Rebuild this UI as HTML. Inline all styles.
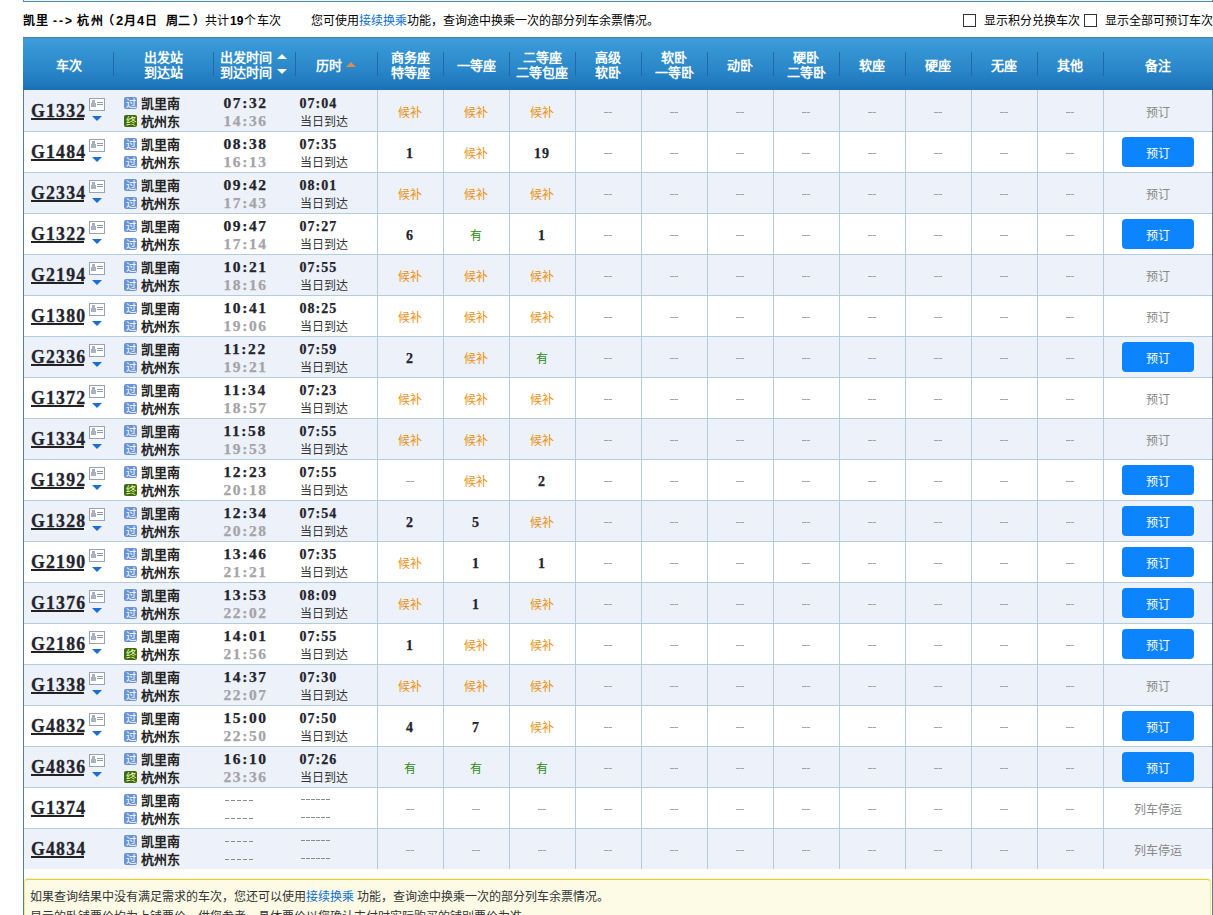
<!DOCTYPE html><html lang="zh-CN"><head><meta charset="utf-8"><style>
*{margin:0;padding:0;box-sizing:border-box}
html,body{width:1213px;height:915px;overflow:hidden;background:#fff}
body{position:relative;font-family:"Liberation Sans",sans-serif;font-size:12px;color:#333}
.a{position:absolute}
.topbox{left:23px;top:-10px;width:1190px;height:12px;border:1px solid #5a88a6;background:#dff9fd}
.title{left:23px;top:12px;height:18px;line-height:18px;white-space:nowrap;color:#000}
.title b{font-weight:bold}
.blue{color:#0b6fd0}
.cb{width:13px;height:13px;border:1px solid #333;background:#fff;top:14px}
.chk{top:12px;line-height:18px;color:#000;white-space:nowrap}
.tbl{left:23px;top:37px;width:1190px;height:900px;border-left:1px solid #527e98;border-right:1px solid #527e98}
.hd{left:23px;top:37px;width:1190px;height:53px;background:linear-gradient(#3e9dd9 0%,#3494d3 25%,#2a87c9 60%,#1f76bb 92%,#1b6db2 100%);border-top:1px solid #4d7f9e}
.hs{width:1px;top:52px;height:24px;background:#2667a8}
.ht{color:#fff;font-weight:bold;font-size:13px;text-align:center;line-height:15px;white-space:nowrap}
.row{left:24px;width:1188px;height:41px}
.odd{background:#edf1f9}
.even{background:#fff}
.hl{left:24px;width:1188px;height:1px;background:#b4cddd}
.vl{width:1px;background:#b4cddd;top:90px;height:779px}
.tn{font-family:"Liberation Serif",serif;font-weight:bold;font-size:17.8px;letter-spacing:1.2px;color:#23232d;line-height:20px;-webkit-text-stroke:0.3px #23232d}
.ul{left:31px;width:53px;height:2px;background:#222}
.card{width:16px;height:13px;border:1px solid #97a6bb;background:#fff}
.tri{width:0;height:0;border-left:5px solid transparent;border-right:5px solid transparent;border-top:5px solid #1a6fd6}
.bd{width:13px;height:12px;border-radius:2px;font-size:10.5px;line-height:12px;text-align:center;color:#fff;overflow:hidden}
.bg1{background:#6a94d6}
.bg2{background:#3f6a0e;color:#e8ffb0}
.st{font-weight:bold;font-size:13px;color:#222;line-height:18px;white-space:nowrap;letter-spacing:0px}
.t1{font-family:"Liberation Serif",serif;font-weight:bold;font-size:15.5px;letter-spacing:1.6px;color:#23232d;line-height:18px;-webkit-text-stroke:0.25px #23232d}
.t2{font-family:"Liberation Serif",serif;font-weight:bold;font-size:15.5px;letter-spacing:1.6px;color:#a4a4a8;line-height:18px;-webkit-text-stroke:0.25px #a4a4a8}
.d1{font-family:"Liberation Serif",serif;font-weight:bold;font-size:14px;letter-spacing:1px;color:#23232d;line-height:18px;-webkit-text-stroke:0.25px #23232d}
.d2{color:#333;line-height:18px;white-space:nowrap}
.sv{width:65px;text-align:center;line-height:18px}
.hb{color:#ec9212}
.num{font-family:"Liberation Serif",serif;font-weight:bold;font-size:14px;letter-spacing:1px;text-indent:1px;color:#23232d;margin-top:0px;-webkit-text-stroke:0.25px #23232d}
.you{color:#2a8a12}
.dsh{width:8px;height:1px;background:linear-gradient(90deg,#a4a4a4 0 4px,#c4c4c4 4px 5px,#a4a4a4 5px 8px)}
.btn{width:72px;height:30px;border-radius:4px;background:#0b84fe;color:#fff;text-align:center;line-height:34px}
.gy{width:108px;text-align:center;color:#888;line-height:18px}
.d5{width:28px;height:1px;background:repeating-linear-gradient(90deg,#8a8a8a 0 4px,transparent 4px 6px)}
.d6{width:29px;height:1px;background:repeating-linear-gradient(90deg,#8a8a8a 0 4px,transparent 4px 5px)}
.note{left:24px;top:879px;width:1187px;height:60px;border:1px solid #f3ec80;border-top-color:#dccb5e;border-radius:4px;background:#fdfbe6;box-shadow:0 -1px 0 #fbf7a8}
.nt{left:30px;line-height:18px;white-space:nowrap;color:#333}
</style></head><body>
<div class="a topbox"></div>
<div class="a title" style="left:23px;font-weight:bold;letter-spacing:1px;">凯里</div>
<div class="a title" style="left:53px;font-weight:bold;letter-spacing:2px;">--&gt;</div>
<div class="a title" style="left:77px;font-weight:bold;letter-spacing:1.5px;">杭州</div>
<div class="a title" style="left:102px;font-weight:bold;letter-spacing:0px;">（</div>
<div class="a title" style="left:116px;font-weight:bold;font-size:13px;letter-spacing:0px;">2</div>
<div class="a title" style="left:124px;font-weight:bold;letter-spacing:0px;">月</div>
<div class="a title" style="left:137px;font-weight:bold;font-size:13px;letter-spacing:0px;">4</div>
<div class="a title" style="left:145px;font-weight:bold;letter-spacing:0px;">日</div>
<div class="a title" style="left:166px;font-weight:bold;letter-spacing:0px;">周二</div>
<div class="a title" style="left:193px;font-weight:bold;letter-spacing:0px;">）</div>
<div class="a title" style="left:205px;letter-spacing:0px;">共计</div>
<div class="a title" style="left:230px;font-weight:bold;font-family:"Liberation Serif",serif;font-size:15px;letter-spacing:1px;">19</div>
<div class="a title" style="left:244px;letter-spacing:0.5px;">个车次</div>
<div class="a title" style="left:311px">您可使用<span class="blue">接续换乘</span>功能，查询途中换乘一次的部分列车余票情况。</div>
<div class="a cb" style="left:963px"></div><div class="a chk" style="left:984px">显示积分兑换车次</div>
<div class="a cb" style="left:1084px"></div><div class="a chk" style="left:1105px">显示全部可预订车次</div>
<div class="a tbl"></div>
<div class="a hd"></div>
<div class="a hs" style="left:113px"></div>
<div class="a hs" style="left:213px"></div>
<div class="a hs" style="left:295px"></div>
<div class="a hs" style="left:377px"></div>
<div class="a hs" style="left:443px"></div>
<div class="a hs" style="left:509px"></div>
<div class="a hs" style="left:575px"></div>
<div class="a hs" style="left:641px"></div>
<div class="a hs" style="left:707px"></div>
<div class="a hs" style="left:773px"></div>
<div class="a hs" style="left:839px"></div>
<div class="a hs" style="left:905px"></div>
<div class="a hs" style="left:971px"></div>
<div class="a hs" style="left:1037px"></div>
<div class="a hs" style="left:1103px"></div>
<div class="a ht" style="left:8.5px;width:120px;top:58px">车次</div>
<div class="a ht" style="left:103.5px;width:120px;top:50px">出发站<br>到达站</div>
<div class="a ht" style="left:220px;top:50px;text-align:left">出发时间<br>到达时间</div>
<svg class="a" style="left:277px;top:54px" width="10" height="5"><polygon points="0,5 5,0 10,5" fill="#fff"/></svg>
<svg class="a" style="left:277px;top:69px" width="10" height="5"><polygon points="0,0 5,5 10,0" fill="#fff"/></svg>
<div class="a ht" style="left:316px;top:58px;text-align:left">历时</div>
<svg class="a" style="left:346px;top:62px" width="10" height="5"><polygon points="0,5 5,0 10,5" fill="#e38a4a"/></svg>
<div class="a ht" style="left:350.0px;width:120px;top:50px">商务座<br>特等座</div>
<div class="a ht" style="left:416.0px;width:120px;top:58px">一等座</div>
<div class="a ht" style="left:482.0px;width:120px;top:50px">二等座<br>二等包座</div>
<div class="a ht" style="left:548.0px;width:120px;top:50px">高级<br>软卧</div>
<div class="a ht" style="left:614.0px;width:120px;top:50px">软卧<br>一等卧</div>
<div class="a ht" style="left:680.0px;width:120px;top:58px">动卧</div>
<div class="a ht" style="left:746.0px;width:120px;top:50px">硬卧<br>二等卧</div>
<div class="a ht" style="left:812.0px;width:120px;top:58px">软座</div>
<div class="a ht" style="left:878.0px;width:120px;top:58px">硬座</div>
<div class="a ht" style="left:944.0px;width:120px;top:58px">无座</div>
<div class="a ht" style="left:1010.0px;width:120px;top:58px">其他</div>
<div class="a ht" style="left:1097.5px;width:120px;top:58px">备注</div>
<div class="a row odd" style="top:90px"></div>
<div class="a tn" style="left:31px;top:101px">G1332</div>
<div class="a ul" style="top:118px"></div>
<svg class="a" style="left:89px;top:98px" width="16" height="13"><rect x="0.5" y="0.5" width="15" height="12" fill="#fff" stroke="#97a3b5"/><rect x="3" y="2" width="3" height="4" fill="#a8b1bd"/><rect x="2" y="5" width="5" height="4" fill="#a8b1bd"/><rect x="8" y="4" width="6" height="1" fill="#8e99aa"/><rect x="8" y="6" width="6" height="1" fill="#8e99aa"/></svg>
<div class="a tri" style="left:92px;top:116px"></div>
<div class="a bd bg1" style="left:124px;top:97px">过</div>
<div class="a bd bg2" style="left:124px;top:115px">终</div>
<div class="a st" style="left:141px;top:95px">凯里南</div>
<div class="a st" style="left:141px;top:113px">杭州东</div>
<div class="a t1" style="left:223.5px;top:94px">07:32</div>
<div class="a t2" style="left:223.5px;top:112px">14:36</div>
<div class="a d1" style="left:299.5px;top:95px">07:04</div>
<div class="a d2" style="left:300px;top:113px">当日到达</div>
<div class="a sv hb" style="left:377px;top:104px">候补</div>
<div class="a sv hb" style="left:443px;top:104px">候补</div>
<div class="a sv hb" style="left:509px;top:104px">候补</div>
<div class="a dsh" style="left:604px;top:112px"></div>
<div class="a dsh" style="left:670px;top:112px"></div>
<div class="a dsh" style="left:736px;top:112px"></div>
<div class="a dsh" style="left:802px;top:112px"></div>
<div class="a dsh" style="left:868px;top:112px"></div>
<div class="a dsh" style="left:934px;top:112px"></div>
<div class="a dsh" style="left:1000px;top:112px"></div>
<div class="a dsh" style="left:1066px;top:112px"></div>
<div class="a gy" style="left:1104px;top:104px">预订</div>
<div class="a row even" style="top:132px;height:40px"></div>
<div class="a hl" style="top:131px"></div>
<div class="a tn" style="left:31px;top:142px">G1484</div>
<div class="a ul" style="top:159px"></div>
<svg class="a" style="left:89px;top:139px" width="16" height="13"><rect x="0.5" y="0.5" width="15" height="12" fill="#fff" stroke="#97a3b5"/><rect x="3" y="2" width="3" height="4" fill="#a8b1bd"/><rect x="2" y="5" width="5" height="4" fill="#a8b1bd"/><rect x="8" y="4" width="6" height="1" fill="#8e99aa"/><rect x="8" y="6" width="6" height="1" fill="#8e99aa"/></svg>
<div class="a tri" style="left:92px;top:157px"></div>
<div class="a bd bg1" style="left:124px;top:138px">过</div>
<div class="a bd bg1" style="left:124px;top:156px">过</div>
<div class="a st" style="left:141px;top:136px">凯里南</div>
<div class="a st" style="left:141px;top:154px">杭州东</div>
<div class="a t1" style="left:223.5px;top:135px">08:38</div>
<div class="a t2" style="left:223.5px;top:153px">16:13</div>
<div class="a d1" style="left:299.5px;top:136px">07:35</div>
<div class="a d2" style="left:300px;top:154px">当日到达</div>
<div class="a sv num" style="left:377px;top:145px">1</div>
<div class="a sv hb" style="left:443px;top:145px">候补</div>
<div class="a sv num" style="left:509px;top:145px">19</div>
<div class="a dsh" style="left:604px;top:153px"></div>
<div class="a dsh" style="left:670px;top:153px"></div>
<div class="a dsh" style="left:736px;top:153px"></div>
<div class="a dsh" style="left:802px;top:153px"></div>
<div class="a dsh" style="left:868px;top:153px"></div>
<div class="a dsh" style="left:934px;top:153px"></div>
<div class="a dsh" style="left:1000px;top:153px"></div>
<div class="a dsh" style="left:1066px;top:153px"></div>
<div class="a btn" style="left:1122px;top:137px">预订</div>
<div class="a row odd" style="top:173px;height:40px"></div>
<div class="a hl" style="top:172px"></div>
<div class="a tn" style="left:31px;top:183px">G2334</div>
<div class="a ul" style="top:200px"></div>
<svg class="a" style="left:89px;top:180px" width="16" height="13"><rect x="0.5" y="0.5" width="15" height="12" fill="#fff" stroke="#97a3b5"/><rect x="3" y="2" width="3" height="4" fill="#a8b1bd"/><rect x="2" y="5" width="5" height="4" fill="#a8b1bd"/><rect x="8" y="4" width="6" height="1" fill="#8e99aa"/><rect x="8" y="6" width="6" height="1" fill="#8e99aa"/></svg>
<div class="a tri" style="left:92px;top:198px"></div>
<div class="a bd bg1" style="left:124px;top:179px">过</div>
<div class="a bd bg1" style="left:124px;top:197px">过</div>
<div class="a st" style="left:141px;top:177px">凯里南</div>
<div class="a st" style="left:141px;top:195px">杭州东</div>
<div class="a t1" style="left:223.5px;top:176px">09:42</div>
<div class="a t2" style="left:223.5px;top:194px">17:43</div>
<div class="a d1" style="left:299.5px;top:177px">08:01</div>
<div class="a d2" style="left:300px;top:195px">当日到达</div>
<div class="a sv hb" style="left:377px;top:186px">候补</div>
<div class="a sv hb" style="left:443px;top:186px">候补</div>
<div class="a sv hb" style="left:509px;top:186px">候补</div>
<div class="a dsh" style="left:604px;top:194px"></div>
<div class="a dsh" style="left:670px;top:194px"></div>
<div class="a dsh" style="left:736px;top:194px"></div>
<div class="a dsh" style="left:802px;top:194px"></div>
<div class="a dsh" style="left:868px;top:194px"></div>
<div class="a dsh" style="left:934px;top:194px"></div>
<div class="a dsh" style="left:1000px;top:194px"></div>
<div class="a dsh" style="left:1066px;top:194px"></div>
<div class="a gy" style="left:1104px;top:186px">预订</div>
<div class="a row even" style="top:214px;height:40px"></div>
<div class="a hl" style="top:213px"></div>
<div class="a tn" style="left:31px;top:224px">G1322</div>
<div class="a ul" style="top:241px"></div>
<svg class="a" style="left:89px;top:221px" width="16" height="13"><rect x="0.5" y="0.5" width="15" height="12" fill="#fff" stroke="#97a3b5"/><rect x="3" y="2" width="3" height="4" fill="#a8b1bd"/><rect x="2" y="5" width="5" height="4" fill="#a8b1bd"/><rect x="8" y="4" width="6" height="1" fill="#8e99aa"/><rect x="8" y="6" width="6" height="1" fill="#8e99aa"/></svg>
<div class="a tri" style="left:92px;top:239px"></div>
<div class="a bd bg1" style="left:124px;top:220px">过</div>
<div class="a bd bg1" style="left:124px;top:238px">过</div>
<div class="a st" style="left:141px;top:218px">凯里南</div>
<div class="a st" style="left:141px;top:236px">杭州东</div>
<div class="a t1" style="left:223.5px;top:217px">09:47</div>
<div class="a t2" style="left:223.5px;top:235px">17:14</div>
<div class="a d1" style="left:299.5px;top:218px">07:27</div>
<div class="a d2" style="left:300px;top:236px">当日到达</div>
<div class="a sv num" style="left:377px;top:227px">6</div>
<div class="a sv you" style="left:443px;top:227px">有</div>
<div class="a sv num" style="left:509px;top:227px">1</div>
<div class="a dsh" style="left:604px;top:235px"></div>
<div class="a dsh" style="left:670px;top:235px"></div>
<div class="a dsh" style="left:736px;top:235px"></div>
<div class="a dsh" style="left:802px;top:235px"></div>
<div class="a dsh" style="left:868px;top:235px"></div>
<div class="a dsh" style="left:934px;top:235px"></div>
<div class="a dsh" style="left:1000px;top:235px"></div>
<div class="a dsh" style="left:1066px;top:235px"></div>
<div class="a btn" style="left:1122px;top:219px">预订</div>
<div class="a row odd" style="top:255px;height:40px"></div>
<div class="a hl" style="top:254px"></div>
<div class="a tn" style="left:31px;top:265px">G2194</div>
<div class="a ul" style="top:282px"></div>
<svg class="a" style="left:89px;top:262px" width="16" height="13"><rect x="0.5" y="0.5" width="15" height="12" fill="#fff" stroke="#97a3b5"/><rect x="3" y="2" width="3" height="4" fill="#a8b1bd"/><rect x="2" y="5" width="5" height="4" fill="#a8b1bd"/><rect x="8" y="4" width="6" height="1" fill="#8e99aa"/><rect x="8" y="6" width="6" height="1" fill="#8e99aa"/></svg>
<div class="a tri" style="left:92px;top:280px"></div>
<div class="a bd bg1" style="left:124px;top:261px">过</div>
<div class="a bd bg1" style="left:124px;top:279px">过</div>
<div class="a st" style="left:141px;top:259px">凯里南</div>
<div class="a st" style="left:141px;top:277px">杭州东</div>
<div class="a t1" style="left:223.5px;top:258px">10:21</div>
<div class="a t2" style="left:223.5px;top:276px">18:16</div>
<div class="a d1" style="left:299.5px;top:259px">07:55</div>
<div class="a d2" style="left:300px;top:277px">当日到达</div>
<div class="a sv hb" style="left:377px;top:268px">候补</div>
<div class="a sv hb" style="left:443px;top:268px">候补</div>
<div class="a sv hb" style="left:509px;top:268px">候补</div>
<div class="a dsh" style="left:604px;top:276px"></div>
<div class="a dsh" style="left:670px;top:276px"></div>
<div class="a dsh" style="left:736px;top:276px"></div>
<div class="a dsh" style="left:802px;top:276px"></div>
<div class="a dsh" style="left:868px;top:276px"></div>
<div class="a dsh" style="left:934px;top:276px"></div>
<div class="a dsh" style="left:1000px;top:276px"></div>
<div class="a dsh" style="left:1066px;top:276px"></div>
<div class="a gy" style="left:1104px;top:268px">预订</div>
<div class="a row even" style="top:296px;height:40px"></div>
<div class="a hl" style="top:295px"></div>
<div class="a tn" style="left:31px;top:306px">G1380</div>
<div class="a ul" style="top:323px"></div>
<svg class="a" style="left:89px;top:303px" width="16" height="13"><rect x="0.5" y="0.5" width="15" height="12" fill="#fff" stroke="#97a3b5"/><rect x="3" y="2" width="3" height="4" fill="#a8b1bd"/><rect x="2" y="5" width="5" height="4" fill="#a8b1bd"/><rect x="8" y="4" width="6" height="1" fill="#8e99aa"/><rect x="8" y="6" width="6" height="1" fill="#8e99aa"/></svg>
<div class="a tri" style="left:92px;top:321px"></div>
<div class="a bd bg1" style="left:124px;top:302px">过</div>
<div class="a bd bg1" style="left:124px;top:320px">过</div>
<div class="a st" style="left:141px;top:300px">凯里南</div>
<div class="a st" style="left:141px;top:318px">杭州东</div>
<div class="a t1" style="left:223.5px;top:299px">10:41</div>
<div class="a t2" style="left:223.5px;top:317px">19:06</div>
<div class="a d1" style="left:299.5px;top:300px">08:25</div>
<div class="a d2" style="left:300px;top:318px">当日到达</div>
<div class="a sv hb" style="left:377px;top:309px">候补</div>
<div class="a sv hb" style="left:443px;top:309px">候补</div>
<div class="a sv hb" style="left:509px;top:309px">候补</div>
<div class="a dsh" style="left:604px;top:317px"></div>
<div class="a dsh" style="left:670px;top:317px"></div>
<div class="a dsh" style="left:736px;top:317px"></div>
<div class="a dsh" style="left:802px;top:317px"></div>
<div class="a dsh" style="left:868px;top:317px"></div>
<div class="a dsh" style="left:934px;top:317px"></div>
<div class="a dsh" style="left:1000px;top:317px"></div>
<div class="a dsh" style="left:1066px;top:317px"></div>
<div class="a gy" style="left:1104px;top:309px">预订</div>
<div class="a row odd" style="top:337px;height:40px"></div>
<div class="a hl" style="top:336px"></div>
<div class="a tn" style="left:31px;top:347px">G2336</div>
<div class="a ul" style="top:364px"></div>
<svg class="a" style="left:89px;top:344px" width="16" height="13"><rect x="0.5" y="0.5" width="15" height="12" fill="#fff" stroke="#97a3b5"/><rect x="3" y="2" width="3" height="4" fill="#a8b1bd"/><rect x="2" y="5" width="5" height="4" fill="#a8b1bd"/><rect x="8" y="4" width="6" height="1" fill="#8e99aa"/><rect x="8" y="6" width="6" height="1" fill="#8e99aa"/></svg>
<div class="a tri" style="left:92px;top:362px"></div>
<div class="a bd bg1" style="left:124px;top:343px">过</div>
<div class="a bd bg1" style="left:124px;top:361px">过</div>
<div class="a st" style="left:141px;top:341px">凯里南</div>
<div class="a st" style="left:141px;top:359px">杭州东</div>
<div class="a t1" style="left:223.5px;top:340px">11:22</div>
<div class="a t2" style="left:223.5px;top:358px">19:21</div>
<div class="a d1" style="left:299.5px;top:341px">07:59</div>
<div class="a d2" style="left:300px;top:359px">当日到达</div>
<div class="a sv num" style="left:377px;top:350px">2</div>
<div class="a sv hb" style="left:443px;top:350px">候补</div>
<div class="a sv you" style="left:509px;top:350px">有</div>
<div class="a dsh" style="left:604px;top:358px"></div>
<div class="a dsh" style="left:670px;top:358px"></div>
<div class="a dsh" style="left:736px;top:358px"></div>
<div class="a dsh" style="left:802px;top:358px"></div>
<div class="a dsh" style="left:868px;top:358px"></div>
<div class="a dsh" style="left:934px;top:358px"></div>
<div class="a dsh" style="left:1000px;top:358px"></div>
<div class="a dsh" style="left:1066px;top:358px"></div>
<div class="a btn" style="left:1122px;top:342px">预订</div>
<div class="a row even" style="top:378px;height:40px"></div>
<div class="a hl" style="top:377px"></div>
<div class="a tn" style="left:31px;top:388px">G1372</div>
<div class="a ul" style="top:405px"></div>
<svg class="a" style="left:89px;top:385px" width="16" height="13"><rect x="0.5" y="0.5" width="15" height="12" fill="#fff" stroke="#97a3b5"/><rect x="3" y="2" width="3" height="4" fill="#a8b1bd"/><rect x="2" y="5" width="5" height="4" fill="#a8b1bd"/><rect x="8" y="4" width="6" height="1" fill="#8e99aa"/><rect x="8" y="6" width="6" height="1" fill="#8e99aa"/></svg>
<div class="a tri" style="left:92px;top:403px"></div>
<div class="a bd bg1" style="left:124px;top:384px">过</div>
<div class="a bd bg1" style="left:124px;top:402px">过</div>
<div class="a st" style="left:141px;top:382px">凯里南</div>
<div class="a st" style="left:141px;top:400px">杭州东</div>
<div class="a t1" style="left:223.5px;top:381px">11:34</div>
<div class="a t2" style="left:223.5px;top:399px">18:57</div>
<div class="a d1" style="left:299.5px;top:382px">07:23</div>
<div class="a d2" style="left:300px;top:400px">当日到达</div>
<div class="a sv hb" style="left:377px;top:391px">候补</div>
<div class="a sv hb" style="left:443px;top:391px">候补</div>
<div class="a sv hb" style="left:509px;top:391px">候补</div>
<div class="a dsh" style="left:604px;top:399px"></div>
<div class="a dsh" style="left:670px;top:399px"></div>
<div class="a dsh" style="left:736px;top:399px"></div>
<div class="a dsh" style="left:802px;top:399px"></div>
<div class="a dsh" style="left:868px;top:399px"></div>
<div class="a dsh" style="left:934px;top:399px"></div>
<div class="a dsh" style="left:1000px;top:399px"></div>
<div class="a dsh" style="left:1066px;top:399px"></div>
<div class="a gy" style="left:1104px;top:391px">预订</div>
<div class="a row odd" style="top:419px;height:40px"></div>
<div class="a hl" style="top:418px"></div>
<div class="a tn" style="left:31px;top:429px">G1334</div>
<div class="a ul" style="top:446px"></div>
<svg class="a" style="left:89px;top:426px" width="16" height="13"><rect x="0.5" y="0.5" width="15" height="12" fill="#fff" stroke="#97a3b5"/><rect x="3" y="2" width="3" height="4" fill="#a8b1bd"/><rect x="2" y="5" width="5" height="4" fill="#a8b1bd"/><rect x="8" y="4" width="6" height="1" fill="#8e99aa"/><rect x="8" y="6" width="6" height="1" fill="#8e99aa"/></svg>
<div class="a tri" style="left:92px;top:444px"></div>
<div class="a bd bg1" style="left:124px;top:425px">过</div>
<div class="a bd bg1" style="left:124px;top:443px">过</div>
<div class="a st" style="left:141px;top:423px">凯里南</div>
<div class="a st" style="left:141px;top:441px">杭州东</div>
<div class="a t1" style="left:223.5px;top:422px">11:58</div>
<div class="a t2" style="left:223.5px;top:440px">19:53</div>
<div class="a d1" style="left:299.5px;top:423px">07:55</div>
<div class="a d2" style="left:300px;top:441px">当日到达</div>
<div class="a sv hb" style="left:377px;top:432px">候补</div>
<div class="a sv hb" style="left:443px;top:432px">候补</div>
<div class="a sv hb" style="left:509px;top:432px">候补</div>
<div class="a dsh" style="left:604px;top:440px"></div>
<div class="a dsh" style="left:670px;top:440px"></div>
<div class="a dsh" style="left:736px;top:440px"></div>
<div class="a dsh" style="left:802px;top:440px"></div>
<div class="a dsh" style="left:868px;top:440px"></div>
<div class="a dsh" style="left:934px;top:440px"></div>
<div class="a dsh" style="left:1000px;top:440px"></div>
<div class="a dsh" style="left:1066px;top:440px"></div>
<div class="a gy" style="left:1104px;top:432px">预订</div>
<div class="a row even" style="top:460px;height:40px"></div>
<div class="a hl" style="top:459px"></div>
<div class="a tn" style="left:31px;top:470px">G1392</div>
<div class="a ul" style="top:487px"></div>
<svg class="a" style="left:89px;top:467px" width="16" height="13"><rect x="0.5" y="0.5" width="15" height="12" fill="#fff" stroke="#97a3b5"/><rect x="3" y="2" width="3" height="4" fill="#a8b1bd"/><rect x="2" y="5" width="5" height="4" fill="#a8b1bd"/><rect x="8" y="4" width="6" height="1" fill="#8e99aa"/><rect x="8" y="6" width="6" height="1" fill="#8e99aa"/></svg>
<div class="a tri" style="left:92px;top:485px"></div>
<div class="a bd bg1" style="left:124px;top:466px">过</div>
<div class="a bd bg2" style="left:124px;top:484px">终</div>
<div class="a st" style="left:141px;top:464px">凯里南</div>
<div class="a st" style="left:141px;top:482px">杭州东</div>
<div class="a t1" style="left:223.5px;top:463px">12:23</div>
<div class="a t2" style="left:223.5px;top:481px">20:18</div>
<div class="a d1" style="left:299.5px;top:464px">07:55</div>
<div class="a d2" style="left:300px;top:482px">当日到达</div>
<div class="a dsh" style="left:406px;top:481px"></div>
<div class="a sv hb" style="left:443px;top:473px">候补</div>
<div class="a sv num" style="left:509px;top:473px">2</div>
<div class="a dsh" style="left:604px;top:481px"></div>
<div class="a dsh" style="left:670px;top:481px"></div>
<div class="a dsh" style="left:736px;top:481px"></div>
<div class="a dsh" style="left:802px;top:481px"></div>
<div class="a dsh" style="left:868px;top:481px"></div>
<div class="a dsh" style="left:934px;top:481px"></div>
<div class="a dsh" style="left:1000px;top:481px"></div>
<div class="a dsh" style="left:1066px;top:481px"></div>
<div class="a btn" style="left:1122px;top:465px">预订</div>
<div class="a row odd" style="top:501px;height:40px"></div>
<div class="a hl" style="top:500px"></div>
<div class="a tn" style="left:31px;top:511px">G1328</div>
<div class="a ul" style="top:528px"></div>
<svg class="a" style="left:89px;top:508px" width="16" height="13"><rect x="0.5" y="0.5" width="15" height="12" fill="#fff" stroke="#97a3b5"/><rect x="3" y="2" width="3" height="4" fill="#a8b1bd"/><rect x="2" y="5" width="5" height="4" fill="#a8b1bd"/><rect x="8" y="4" width="6" height="1" fill="#8e99aa"/><rect x="8" y="6" width="6" height="1" fill="#8e99aa"/></svg>
<div class="a tri" style="left:92px;top:526px"></div>
<div class="a bd bg1" style="left:124px;top:507px">过</div>
<div class="a bd bg1" style="left:124px;top:525px">过</div>
<div class="a st" style="left:141px;top:505px">凯里南</div>
<div class="a st" style="left:141px;top:523px">杭州东</div>
<div class="a t1" style="left:223.5px;top:504px">12:34</div>
<div class="a t2" style="left:223.5px;top:522px">20:28</div>
<div class="a d1" style="left:299.5px;top:505px">07:54</div>
<div class="a d2" style="left:300px;top:523px">当日到达</div>
<div class="a sv num" style="left:377px;top:514px">2</div>
<div class="a sv num" style="left:443px;top:514px">5</div>
<div class="a sv hb" style="left:509px;top:514px">候补</div>
<div class="a dsh" style="left:604px;top:522px"></div>
<div class="a dsh" style="left:670px;top:522px"></div>
<div class="a dsh" style="left:736px;top:522px"></div>
<div class="a dsh" style="left:802px;top:522px"></div>
<div class="a dsh" style="left:868px;top:522px"></div>
<div class="a dsh" style="left:934px;top:522px"></div>
<div class="a dsh" style="left:1000px;top:522px"></div>
<div class="a dsh" style="left:1066px;top:522px"></div>
<div class="a btn" style="left:1122px;top:506px">预订</div>
<div class="a row even" style="top:542px;height:40px"></div>
<div class="a hl" style="top:541px"></div>
<div class="a tn" style="left:31px;top:552px">G2190</div>
<div class="a ul" style="top:569px"></div>
<svg class="a" style="left:89px;top:549px" width="16" height="13"><rect x="0.5" y="0.5" width="15" height="12" fill="#fff" stroke="#97a3b5"/><rect x="3" y="2" width="3" height="4" fill="#a8b1bd"/><rect x="2" y="5" width="5" height="4" fill="#a8b1bd"/><rect x="8" y="4" width="6" height="1" fill="#8e99aa"/><rect x="8" y="6" width="6" height="1" fill="#8e99aa"/></svg>
<div class="a tri" style="left:92px;top:567px"></div>
<div class="a bd bg1" style="left:124px;top:548px">过</div>
<div class="a bd bg1" style="left:124px;top:566px">过</div>
<div class="a st" style="left:141px;top:546px">凯里南</div>
<div class="a st" style="left:141px;top:564px">杭州东</div>
<div class="a t1" style="left:223.5px;top:545px">13:46</div>
<div class="a t2" style="left:223.5px;top:563px">21:21</div>
<div class="a d1" style="left:299.5px;top:546px">07:35</div>
<div class="a d2" style="left:300px;top:564px">当日到达</div>
<div class="a sv hb" style="left:377px;top:555px">候补</div>
<div class="a sv num" style="left:443px;top:555px">1</div>
<div class="a sv num" style="left:509px;top:555px">1</div>
<div class="a dsh" style="left:604px;top:563px"></div>
<div class="a dsh" style="left:670px;top:563px"></div>
<div class="a dsh" style="left:736px;top:563px"></div>
<div class="a dsh" style="left:802px;top:563px"></div>
<div class="a dsh" style="left:868px;top:563px"></div>
<div class="a dsh" style="left:934px;top:563px"></div>
<div class="a dsh" style="left:1000px;top:563px"></div>
<div class="a dsh" style="left:1066px;top:563px"></div>
<div class="a btn" style="left:1122px;top:547px">预订</div>
<div class="a row odd" style="top:583px;height:40px"></div>
<div class="a hl" style="top:582px"></div>
<div class="a tn" style="left:31px;top:593px">G1376</div>
<div class="a ul" style="top:610px"></div>
<svg class="a" style="left:89px;top:590px" width="16" height="13"><rect x="0.5" y="0.5" width="15" height="12" fill="#fff" stroke="#97a3b5"/><rect x="3" y="2" width="3" height="4" fill="#a8b1bd"/><rect x="2" y="5" width="5" height="4" fill="#a8b1bd"/><rect x="8" y="4" width="6" height="1" fill="#8e99aa"/><rect x="8" y="6" width="6" height="1" fill="#8e99aa"/></svg>
<div class="a tri" style="left:92px;top:608px"></div>
<div class="a bd bg1" style="left:124px;top:589px">过</div>
<div class="a bd bg1" style="left:124px;top:607px">过</div>
<div class="a st" style="left:141px;top:587px">凯里南</div>
<div class="a st" style="left:141px;top:605px">杭州东</div>
<div class="a t1" style="left:223.5px;top:586px">13:53</div>
<div class="a t2" style="left:223.5px;top:604px">22:02</div>
<div class="a d1" style="left:299.5px;top:587px">08:09</div>
<div class="a d2" style="left:300px;top:605px">当日到达</div>
<div class="a sv hb" style="left:377px;top:596px">候补</div>
<div class="a sv num" style="left:443px;top:596px">1</div>
<div class="a sv hb" style="left:509px;top:596px">候补</div>
<div class="a dsh" style="left:604px;top:604px"></div>
<div class="a dsh" style="left:670px;top:604px"></div>
<div class="a dsh" style="left:736px;top:604px"></div>
<div class="a dsh" style="left:802px;top:604px"></div>
<div class="a dsh" style="left:868px;top:604px"></div>
<div class="a dsh" style="left:934px;top:604px"></div>
<div class="a dsh" style="left:1000px;top:604px"></div>
<div class="a dsh" style="left:1066px;top:604px"></div>
<div class="a btn" style="left:1122px;top:588px">预订</div>
<div class="a row even" style="top:624px;height:40px"></div>
<div class="a hl" style="top:623px"></div>
<div class="a tn" style="left:31px;top:634px">G2186</div>
<div class="a ul" style="top:651px"></div>
<svg class="a" style="left:89px;top:631px" width="16" height="13"><rect x="0.5" y="0.5" width="15" height="12" fill="#fff" stroke="#97a3b5"/><rect x="3" y="2" width="3" height="4" fill="#a8b1bd"/><rect x="2" y="5" width="5" height="4" fill="#a8b1bd"/><rect x="8" y="4" width="6" height="1" fill="#8e99aa"/><rect x="8" y="6" width="6" height="1" fill="#8e99aa"/></svg>
<div class="a tri" style="left:92px;top:649px"></div>
<div class="a bd bg1" style="left:124px;top:630px">过</div>
<div class="a bd bg2" style="left:124px;top:648px">终</div>
<div class="a st" style="left:141px;top:628px">凯里南</div>
<div class="a st" style="left:141px;top:646px">杭州东</div>
<div class="a t1" style="left:223.5px;top:627px">14:01</div>
<div class="a t2" style="left:223.5px;top:645px">21:56</div>
<div class="a d1" style="left:299.5px;top:628px">07:55</div>
<div class="a d2" style="left:300px;top:646px">当日到达</div>
<div class="a sv num" style="left:377px;top:637px">1</div>
<div class="a sv hb" style="left:443px;top:637px">候补</div>
<div class="a sv hb" style="left:509px;top:637px">候补</div>
<div class="a dsh" style="left:604px;top:645px"></div>
<div class="a dsh" style="left:670px;top:645px"></div>
<div class="a dsh" style="left:736px;top:645px"></div>
<div class="a dsh" style="left:802px;top:645px"></div>
<div class="a dsh" style="left:868px;top:645px"></div>
<div class="a dsh" style="left:934px;top:645px"></div>
<div class="a dsh" style="left:1000px;top:645px"></div>
<div class="a dsh" style="left:1066px;top:645px"></div>
<div class="a btn" style="left:1122px;top:629px">预订</div>
<div class="a row odd" style="top:665px;height:40px"></div>
<div class="a hl" style="top:664px"></div>
<div class="a tn" style="left:31px;top:675px">G1338</div>
<div class="a ul" style="top:692px"></div>
<svg class="a" style="left:89px;top:672px" width="16" height="13"><rect x="0.5" y="0.5" width="15" height="12" fill="#fff" stroke="#97a3b5"/><rect x="3" y="2" width="3" height="4" fill="#a8b1bd"/><rect x="2" y="5" width="5" height="4" fill="#a8b1bd"/><rect x="8" y="4" width="6" height="1" fill="#8e99aa"/><rect x="8" y="6" width="6" height="1" fill="#8e99aa"/></svg>
<div class="a tri" style="left:92px;top:690px"></div>
<div class="a bd bg1" style="left:124px;top:671px">过</div>
<div class="a bd bg1" style="left:124px;top:689px">过</div>
<div class="a st" style="left:141px;top:669px">凯里南</div>
<div class="a st" style="left:141px;top:687px">杭州东</div>
<div class="a t1" style="left:223.5px;top:668px">14:37</div>
<div class="a t2" style="left:223.5px;top:686px">22:07</div>
<div class="a d1" style="left:299.5px;top:669px">07:30</div>
<div class="a d2" style="left:300px;top:687px">当日到达</div>
<div class="a sv hb" style="left:377px;top:678px">候补</div>
<div class="a sv hb" style="left:443px;top:678px">候补</div>
<div class="a sv hb" style="left:509px;top:678px">候补</div>
<div class="a dsh" style="left:604px;top:686px"></div>
<div class="a dsh" style="left:670px;top:686px"></div>
<div class="a dsh" style="left:736px;top:686px"></div>
<div class="a dsh" style="left:802px;top:686px"></div>
<div class="a dsh" style="left:868px;top:686px"></div>
<div class="a dsh" style="left:934px;top:686px"></div>
<div class="a dsh" style="left:1000px;top:686px"></div>
<div class="a dsh" style="left:1066px;top:686px"></div>
<div class="a gy" style="left:1104px;top:678px">预订</div>
<div class="a row even" style="top:706px;height:40px"></div>
<div class="a hl" style="top:705px"></div>
<div class="a tn" style="left:31px;top:716px">G4832</div>
<div class="a ul" style="top:733px"></div>
<svg class="a" style="left:89px;top:713px" width="16" height="13"><rect x="0.5" y="0.5" width="15" height="12" fill="#fff" stroke="#97a3b5"/><rect x="3" y="2" width="3" height="4" fill="#a8b1bd"/><rect x="2" y="5" width="5" height="4" fill="#a8b1bd"/><rect x="8" y="4" width="6" height="1" fill="#8e99aa"/><rect x="8" y="6" width="6" height="1" fill="#8e99aa"/></svg>
<div class="a tri" style="left:92px;top:731px"></div>
<div class="a bd bg1" style="left:124px;top:712px">过</div>
<div class="a bd bg1" style="left:124px;top:730px">过</div>
<div class="a st" style="left:141px;top:710px">凯里南</div>
<div class="a st" style="left:141px;top:728px">杭州东</div>
<div class="a t1" style="left:223.5px;top:709px">15:00</div>
<div class="a t2" style="left:223.5px;top:727px">22:50</div>
<div class="a d1" style="left:299.5px;top:710px">07:50</div>
<div class="a d2" style="left:300px;top:728px">当日到达</div>
<div class="a sv num" style="left:377px;top:719px">4</div>
<div class="a sv num" style="left:443px;top:719px">7</div>
<div class="a sv hb" style="left:509px;top:719px">候补</div>
<div class="a dsh" style="left:604px;top:727px"></div>
<div class="a dsh" style="left:670px;top:727px"></div>
<div class="a dsh" style="left:736px;top:727px"></div>
<div class="a dsh" style="left:802px;top:727px"></div>
<div class="a dsh" style="left:868px;top:727px"></div>
<div class="a dsh" style="left:934px;top:727px"></div>
<div class="a dsh" style="left:1000px;top:727px"></div>
<div class="a dsh" style="left:1066px;top:727px"></div>
<div class="a btn" style="left:1122px;top:711px">预订</div>
<div class="a row odd" style="top:747px;height:40px"></div>
<div class="a hl" style="top:746px"></div>
<div class="a tn" style="left:31px;top:757px">G4836</div>
<div class="a ul" style="top:774px"></div>
<svg class="a" style="left:89px;top:754px" width="16" height="13"><rect x="0.5" y="0.5" width="15" height="12" fill="#fff" stroke="#97a3b5"/><rect x="3" y="2" width="3" height="4" fill="#a8b1bd"/><rect x="2" y="5" width="5" height="4" fill="#a8b1bd"/><rect x="8" y="4" width="6" height="1" fill="#8e99aa"/><rect x="8" y="6" width="6" height="1" fill="#8e99aa"/></svg>
<div class="a tri" style="left:92px;top:772px"></div>
<div class="a bd bg1" style="left:124px;top:753px">过</div>
<div class="a bd bg2" style="left:124px;top:771px">终</div>
<div class="a st" style="left:141px;top:751px">凯里南</div>
<div class="a st" style="left:141px;top:769px">杭州东</div>
<div class="a t1" style="left:223.5px;top:750px">16:10</div>
<div class="a t2" style="left:223.5px;top:768px">23:36</div>
<div class="a d1" style="left:299.5px;top:751px">07:26</div>
<div class="a d2" style="left:300px;top:769px">当日到达</div>
<div class="a sv you" style="left:377px;top:760px">有</div>
<div class="a sv you" style="left:443px;top:760px">有</div>
<div class="a sv you" style="left:509px;top:760px">有</div>
<div class="a dsh" style="left:604px;top:768px"></div>
<div class="a dsh" style="left:670px;top:768px"></div>
<div class="a dsh" style="left:736px;top:768px"></div>
<div class="a dsh" style="left:802px;top:768px"></div>
<div class="a dsh" style="left:868px;top:768px"></div>
<div class="a dsh" style="left:934px;top:768px"></div>
<div class="a dsh" style="left:1000px;top:768px"></div>
<div class="a dsh" style="left:1066px;top:768px"></div>
<div class="a btn" style="left:1122px;top:752px">预订</div>
<div class="a row even" style="top:788px;height:40px"></div>
<div class="a hl" style="top:787px"></div>
<div class="a tn" style="left:31px;top:798px">G1374</div>
<div class="a ul" style="top:815px"></div>
<div class="a bd bg1" style="left:124px;top:794px">过</div>
<div class="a bd bg1" style="left:124px;top:812px">过</div>
<div class="a st" style="left:141px;top:792px">凯里南</div>
<div class="a st" style="left:141px;top:810px">杭州东</div>
<div class="a d5" style="left:225px;top:800px"></div>
<div class="a d6" style="left:301px;top:799px"></div>
<div class="a d5" style="left:225px;top:818px"></div>
<div class="a d6" style="left:301px;top:817px"></div>
<div class="a dsh" style="left:406px;top:809px"></div>
<div class="a dsh" style="left:472px;top:809px"></div>
<div class="a dsh" style="left:538px;top:809px"></div>
<div class="a dsh" style="left:604px;top:809px"></div>
<div class="a dsh" style="left:670px;top:809px"></div>
<div class="a dsh" style="left:736px;top:809px"></div>
<div class="a dsh" style="left:802px;top:809px"></div>
<div class="a dsh" style="left:868px;top:809px"></div>
<div class="a dsh" style="left:934px;top:809px"></div>
<div class="a dsh" style="left:1000px;top:809px"></div>
<div class="a dsh" style="left:1066px;top:809px"></div>
<div class="a gy" style="left:1104px;top:801px">列车停运</div>
<div class="a row odd" style="top:829px;height:40px"></div>
<div class="a hl" style="top:828px"></div>
<div class="a tn" style="left:31px;top:839px">G4834</div>
<div class="a ul" style="top:856px"></div>
<div class="a bd bg1" style="left:124px;top:835px">过</div>
<div class="a bd bg1" style="left:124px;top:853px">过</div>
<div class="a st" style="left:141px;top:833px">凯里南</div>
<div class="a st" style="left:141px;top:851px">杭州东</div>
<div class="a d5" style="left:225px;top:841px"></div>
<div class="a d6" style="left:301px;top:840px"></div>
<div class="a d5" style="left:225px;top:859px"></div>
<div class="a d6" style="left:301px;top:858px"></div>
<div class="a dsh" style="left:406px;top:850px"></div>
<div class="a dsh" style="left:472px;top:850px"></div>
<div class="a dsh" style="left:538px;top:850px"></div>
<div class="a dsh" style="left:604px;top:850px"></div>
<div class="a dsh" style="left:670px;top:850px"></div>
<div class="a dsh" style="left:736px;top:850px"></div>
<div class="a dsh" style="left:802px;top:850px"></div>
<div class="a dsh" style="left:868px;top:850px"></div>
<div class="a dsh" style="left:934px;top:850px"></div>
<div class="a dsh" style="left:1000px;top:850px"></div>
<div class="a dsh" style="left:1066px;top:850px"></div>
<div class="a gy" style="left:1104px;top:842px">列车停运</div>
<div class="a vl" style="left:377px"></div>
<div class="a vl" style="left:443px"></div>
<div class="a vl" style="left:509px"></div>
<div class="a vl" style="left:575px"></div>
<div class="a vl" style="left:641px"></div>
<div class="a vl" style="left:707px"></div>
<div class="a vl" style="left:773px"></div>
<div class="a vl" style="left:839px"></div>
<div class="a vl" style="left:905px"></div>
<div class="a vl" style="left:971px"></div>
<div class="a vl" style="left:1037px"></div>
<div class="a vl" style="left:1103px"></div>
<div class="a note"></div>
<div class="a nt" style="top:888px">如果查询结果中没有满足需求的车次，您还可以使用<span class="blue">接续换乘</span> 功能，查询途中换乘一次的部分列车余票情况。</div>
<div class="a nt" style="top:908px">显示的卧铺票价均为上铺票价，供您参考。具体票价以您确认支付时实际购买的铺别票价为准。</div>
</body></html>
